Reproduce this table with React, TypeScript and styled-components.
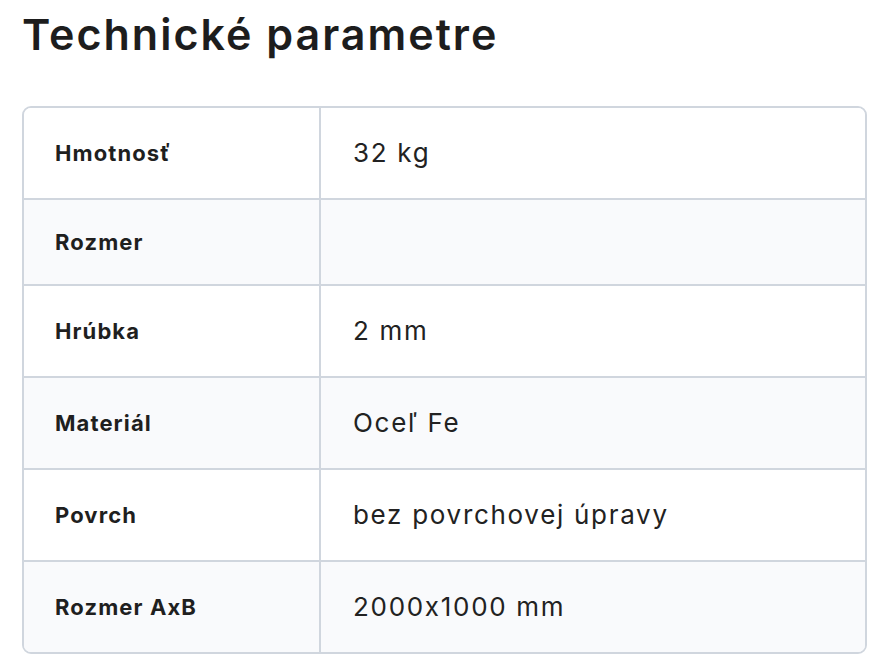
import React from "react";
import styled, { createGlobalStyle } from "styled-components";

const GlobalStyle = createGlobalStyle`
  html, body {
    margin: 0;
    padding: 0;
    background: #ffffff;
  }
  body {
    font-family: "Inter", "Noto Sans", sans-serif;
    font-feature-settings: "calt" 0;
    color: #1f1f1f;
  }
`;

const Page = styled.div`
  padding: 4px 15px 0 22px;
`;

const Title = styled.h2`
  margin: 0 0 42px 0;
  font-size: 43px;
  line-height: 60px;
  font-weight: 600;
  letter-spacing: 2px;
  color: #1d1d1d;
`;

const TableFrame = styled.div`
  border: 2px solid #d0d6de;
  border-radius: 9px;
  overflow: hidden;
`;

const Table = styled.table`
  width: 100%;
  border-collapse: collapse;
  table-layout: fixed;
`;

const Row = styled.tr<{ $shaded: boolean; $first: boolean }>`
  background: ${(p) => (p.$shaded ? "#f9fafc" : "#ffffff")};
  border-top: ${(p) => (p.$first ? "none" : "2px solid #d0d6de")};
`;

const Label = styled.td`
  width: 264px;
  padding: 30px 0 30px 31px;
  font-size: 22px;
  line-height: 24px;
  font-weight: 700;
  letter-spacing: 1.1px;
  color: #1f1f1f;
  border-right: 2px solid #d0d6de;
  vertical-align: middle;
`;

const Value = styled.td`
  padding: 30px 0 30px 32px;
  font-size: 26px;
  line-height: 30px;
  font-weight: 400;
  letter-spacing: 1.7px;
  color: #222222;
  vertical-align: middle;
`;

const params: [string, string][] = [
  ["Hmotnosť", "32 kg"],
  ["Rozmer", ""],
  ["Hrúbka", "2 mm"],
  ["Materiál", "Oceľ Fe"],
  ["Povrch", "bez povrchovej úpravy"],
  ["Rozmer AxB", "2000x1000 mm"],
];

export default function App() {
  return (
    <>
      <GlobalStyle />
      <Page>
        <Title>Technické parametre</Title>
        <TableFrame>
          <Table>
            <tbody>
              {params.map(([label, value], i) => (
                <Row key={label} $shaded={i % 2 === 1} $first={i === 0}>
                  <Label>{label}</Label>
                  <Value>{value}</Value>
                </Row>
              ))}
            </tbody>
          </Table>
        </TableFrame>
      </Page>
    </>
  );
}
